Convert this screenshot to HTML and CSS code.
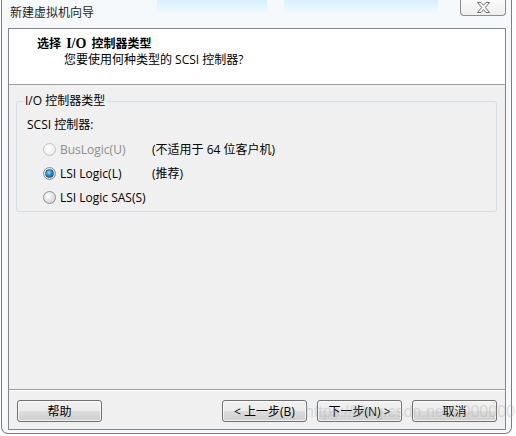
FILE: index.html
```html
<!DOCTYPE html>
<html lang="zh-CN">
<head>
  <meta charset="UTF-8">
  <title>新建虚拟机向导</title>
  <link rel="stylesheet" href="styles.css">
</head>
<body>
  <div class="window">
    <div class="titlebar">
      <span class="title">新建虚拟机向导</span>
      <div class="btn-close">
        <svg width="15" height="11" viewBox="0 0 15 11">
          <path d="M1.5 0.5 H5 L7.5 3.4 L10 0.5 H13.5 L9.3 5.5 L13.5 10.5 H10 L7.5 7.6 L5 10.5 H1.5 L5.7 5.5 Z" fill="#fdfdfd" stroke="#6e6e6e" stroke-width="1" stroke-linejoin="round"/>
        </svg>
      </div>
    </div>

    <div class="wizard">
      <div class="header">
        <div class="header-title">选择 <span class="serif">I/O</span> 控制器类型</div>
        <div class="header-sub">您要使用何种类型的 SCSI 控制器?</div>
      </div>

      <div class="body">
        <fieldset class="group">
          <legend>I/O 控制器类型</legend>
          <div class="group-label">SCSI 控制器:</div>
          <div class="option disabled">
            <span class="radio"></span>
            <span class="option-name">BusLogic(U)</span>
            <span class="option-note">(不适用于 64 位客户机)</span>
          </div>
          <div class="option">
            <span class="radio checked"></span>
            <span class="option-name">LSI Logic(L)</span>
            <span class="option-note">(推荐)</span>
          </div>
          <div class="option">
            <span class="radio"></span>
            <span class="option-name">LSI Logic SAS(S)</span>
          </div>
        </fieldset>
      </div>

      <div class="footer">
        <button class="btn">帮助</button>
        <div class="spacer"></div>
        <button class="btn">&lt; 上一步(B)</button>
        <button class="btn">下一步(N) &gt;</button>
        <button class="btn">取消</button>
        <span class="watermark">https://blog.csdn.net/u0000000</span>
      </div>
    </div>
  </div>
</body>
</html>
```

FILE: styles.css
```css
* {
  margin: 0;
  padding: 0;
  box-sizing: border-box;
  font-family: "Open Sans", "Noto Sans CJK SC", "Microsoft YaHei", sans-serif;
}

body {
  background-color: #fff;
  width: 516px;
  height: 436px;
  overflow: hidden;
}

.window {
  margin-left: 1px;
  width: 511px;
  height: 434px;
  border: 1px solid #7d7d7d;
  border-top: none;
  border-radius: 0 0 7px 7px;
  background-color: #f6f9fb;
  padding: 0 5px 4px 6px;
}

.titlebar {
  height: 28px;
  display: flex;
  align-items: flex-start;
  justify-content: space-between;
  background:
    linear-gradient(#d6f0fd, #e6f7fe 8px, rgba(255, 255, 255, 0)) 155px 0 / 110px 14px no-repeat,
    linear-gradient(#d6f0fd, #e6f7fe 8px, rgba(255, 255, 255, 0)) 282px 0 / 154px 14px no-repeat;
  margin: 0 -5px 0 -6px;
  padding: 0 5px 0 8px;
}

.title {
  font-size: 12px;
  line-height: 16px;
  margin-top: 5px;
  color: #1e1e1e;
}

.btn-close {
  width: 46px;
  height: 17px;
  border: 1px solid #8c8c8c;
  border-top: none;
  border-radius: 0 0 4px 4px;
  background: linear-gradient(#fbfbfb, #eeeeee);
  display: flex;
  align-items: center;
  justify-content: center;
  margin-top: -1px;
}

.wizard {
  width: 498px;
  height: 402px;
  border: 1px solid #868686;
  background-color: #f0f0f0;
  display: flex;
  flex-direction: column;
}

.header {
  background-color: #fff;
  height: 56px;
  border-bottom: 1px solid #a0a0a0;
  padding: 7px 0 0 28px;
  color: #000;
}

.header-title {
  font-size: 12px;
  line-height: 16px;
  font-weight: bold;
  word-spacing: 2px;
}

.serif {
  font-family: "Liberation Serif", serif;
  font-size: 14px;
}

.header-sub {
  font-size: 12px;
  line-height: 16px;
  padding-left: 27px;
}

.body {
  flex: 1;
  padding: 8px 8px 0 7px;
  border-bottom: 1px solid #a0a0a0;
}

.group {
  border: 1px solid #d5dfe5;
  border-radius: 3px;
  padding: 4px 6px 2px 6px;
  width: 481px;
}

.group legend {
  font-size: 12px;
  line-height: 16px;
  padding: 0 2px;
  color: #000;
}

.group-label {
  font-size: 12px;
  line-height: 24px;
  padding-left: 4px;
  color: #000;
}

.option {
  display: flex;
  align-items: center;
  height: 24px;
  padding-left: 20px;
  font-size: 12px;
  color: #000;
}

.option.disabled {
  color: #8d8d8d;
}

.option-name {
  width: 92px;
  margin-left: 4px;
}

.option-note {
  color: #000;
}

.radio {
  width: 13px;
  height: 13px;
  border-radius: 50%;
  border: 1px solid #8e8f8f;
  background: radial-gradient(circle at 40% 35%, #ffffff 0, #e6e6e6 45%, #c9c9c9 100%);
  display: flex;
  align-items: center;
  justify-content: center;
}

.radio.checked::after {
  content: "";
  width: 7px;
  height: 7px;
  border-radius: 50%;
  background: radial-gradient(circle at 40% 35%, #8fdcfb 0, #2c8fcf 45%, #0b4f7e 100%);
  border: 1px solid #1c5c85;
}

.option.disabled .radio {
  border-color: #c4c4c4;
  background: radial-gradient(circle at 40% 35%, #fdfdfd 0, #f1f1f1 60%, #e4e4e4 100%);
}

.footer {
  height: 39px;
  display: flex;
  align-items: flex-start;
  padding: 9px 8px 0 8px;
  gap: 10px;
  border-top: 1px solid #fff;
  position: relative;
}

.spacer {
  flex: 1;
}

.btn {
  width: 85px;
  height: 22px;
  border: 1px solid #707070;
  border-radius: 3px;
  background: linear-gradient(#f2f2f2 0, #ebebeb 50%, #dddddd 51%, #cfcfcf 100%);
  font-size: 12px;
  color: #000;
  box-shadow: inset 0 0 0 1px rgba(255, 255, 255, 0.7);
}

.watermark {
  position: absolute;
  left: 296px;
  top: 12px;
  font-family: "Liberation Sans", Arial, sans-serif;
  font-size: 16px;
  color: rgba(175, 175, 175, 0.4);
  white-space: nowrap;
  pointer-events: none;
}
```
